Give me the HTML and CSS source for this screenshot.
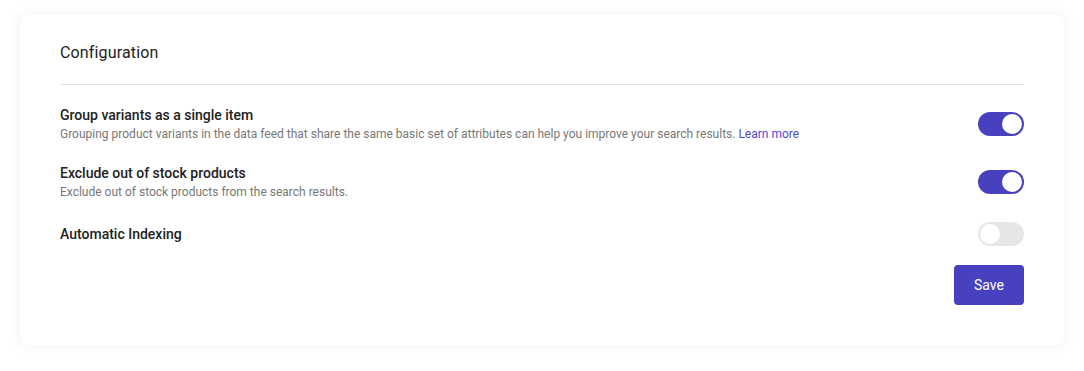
FILE: index.html
```html
<!DOCTYPE html>
<html lang="en">
<head>
    <meta charset="UTF-8">
    <meta name="viewport" content="width=device-width, initial-scale=1.0">
    <title>Configuration</title>
    <link rel="stylesheet" href="styles.css">
</head>
<body>
    <div class="card">
        <div class="card-header">
            <h1 class="card-title">Configuration</h1>
        </div>

        <div class="settings">
            <div class="setting-row">
                <div class="setting-text">
                    <div class="setting-label">Group variants as a single item</div>
                    <div class="setting-help">Grouping product variants in the data feed that share the same basic set of attributes can help you improve your search results. <a href="#" class="link">Learn more</a></div>
                </div>
                <label class="switch">
                    <input type="checkbox" checked>
                    <span class="slider"></span>
                </label>
            </div>

            <div class="setting-row">
                <div class="setting-text">
                    <div class="setting-label">Exclude out of stock products</div>
                    <div class="setting-help">Exclude out of stock products from the search results.</div>
                </div>
                <label class="switch">
                    <input type="checkbox" checked>
                    <span class="slider"></span>
                </label>
            </div>

            <div class="setting-row">
                <div class="setting-text">
                    <div class="setting-label setting-label-solo">Automatic Indexing</div>
                </div>
                <label class="switch">
                    <input type="checkbox">
                    <span class="slider"></span>
                </label>
            </div>
        </div>

        <div class="actions">
            <button class="button">Save</button>
        </div>
    </div>
</body>
</html>
```

FILE: styles.css
```css
:root {
    --accent: #4841bf;
    --text: #222222;
    --muted: #777777;
    --line: #e2e2e2;
}

body {
    margin: 0;
    padding: 15px 20px;
    font-family: Roboto, "Liberation Sans", sans-serif;
    background: #ffffff;
    color: var(--text);
}

.card {
    background: #ffffff;
    border-radius: 8px;
    box-shadow: 0 0 14px rgba(30, 30, 90, 0.06);
    padding: 26px 40px 40px;
}

.card-header {
    border-bottom: 1px solid var(--line);
    padding-bottom: 19px;
}

.card-title {
    margin: 0;
    font-size: 16px;
    line-height: 24px;
    font-weight: 400;
    letter-spacing: 0.15px;
    color: var(--text);
}

.settings {
    display: flex;
    flex-direction: column;
    gap: 20px;
    padding-top: 20px;
}

.setting-row {
    display: flex;
    align-items: center;
    justify-content: space-between;
    gap: 24px;
}

.setting-label {
    font-size: 14px;
    line-height: 20px;
    font-weight: 500;
}

.setting-label-solo {
    line-height: 24px;
    padding-top: 1px;
}

.setting-help {
    font-size: 12px;
    line-height: 18px;
    color: var(--muted);
}

.link {
    color: #5048cc;
    text-decoration: none;
}

.switch {
    position: relative;
    flex-shrink: 0;
    width: 46px;
    height: 24px;
}

.switch input {
    display: none;
}

.slider {
    position: absolute;
    inset: 0;
    border-radius: 12px;
    background: #e6e6e6;
    cursor: pointer;
}

.slider::before {
    content: "";
    position: absolute;
    top: 2px;
    left: 2px;
    width: 20px;
    height: 20px;
    border-radius: 50%;
    background: #ffffff;
}

.switch input:checked + .slider {
    background: var(--accent);
}

.switch input:checked + .slider::before {
    left: 24px;
}

.actions {
    display: flex;
    justify-content: flex-end;
    margin-top: 19px;
}

.button {
    background: var(--accent);
    color: #ffffff;
    border: none;
    border-radius: 4px;
    width: 70px;
    height: 40px;
    font-size: 14px;
    font-family: Roboto, "Liberation Sans", sans-serif;
    cursor: pointer;
}
```
